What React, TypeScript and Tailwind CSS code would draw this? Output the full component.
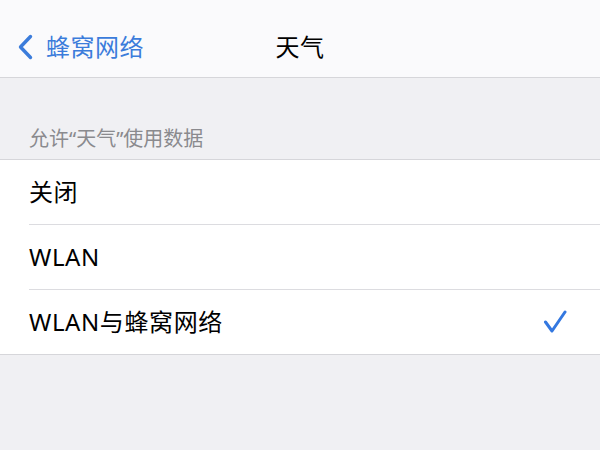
import { Fragment } from 'react';

const font = { fontFamily: '"Noto Sans", "Noto Sans CJK SC", sans-serif' };

const options = [
  { label: '关闭', checked: false },
  { label: 'WLAN', checked: false },
  { label: 'WLAN与蜂窝网络', checked: true },
];

export default function App() {
  return (
    <div className="w-[600px] h-[450px] bg-[#f0f0f3] overflow-hidden" style={font}>
      {/* nav bar */}
      <div className="h-[78px] bg-[#fafafc] border-b border-[#d6d6da] pt-[27px]">
        <div className="grid grid-cols-[1fr_auto_1fr] items-center h-[40px]">
          <div className="flex items-center pl-[17px] text-[#3b7cdb]">
            <svg width="18" height="26" viewBox="0 0 18 26" fill="none">
              <path d="M13.5 2.5 L3.5 13 L13.5 23.5" stroke="currentColor" strokeWidth="3.4" strokeLinecap="round" strokeLinejoin="round" />
            </svg>
            <span className="ml-[11px] text-[24px] leading-none tracking-[0.5px]">蜂窝网络</span>
          </div>
          <div className="text-[24px] leading-none text-black tracking-[0.5px]">天气</div>
          <div />
        </div>
      </div>

      {/* section header */}
      <div className="h-[81px] flex items-end pl-[29px] pb-2">
        <span className="text-[20px] leading-[24px] text-[#8a8a8e]">允许“天气”使用数据</span>
      </div>

      {/* options */}
      <div className="bg-white border-y border-[#d6d6da]">
        {options.map((o, i) => (
          <Fragment key={o.label}>
            {i > 0 && <div className="ml-[29px] h-px bg-[#dcdce0]" />}
            <div className="h-[64px] flex items-center justify-between pl-[29px] pr-[33px]">
              <span className="text-[24px] leading-none text-black tracking-[0.6px]">{o.label}</span>
              {o.checked && (
                <svg width="24" height="24" viewBox="0 0 24 24" fill="none">
                  <path d="M2.5 12 L9 21 L22 2" stroke="#3478e0" strokeWidth="3" strokeLinecap="round" strokeLinejoin="round" />
                </svg>
              )}
            </div>
          </Fragment>
        ))}
      </div>
    </div>
  );
}
